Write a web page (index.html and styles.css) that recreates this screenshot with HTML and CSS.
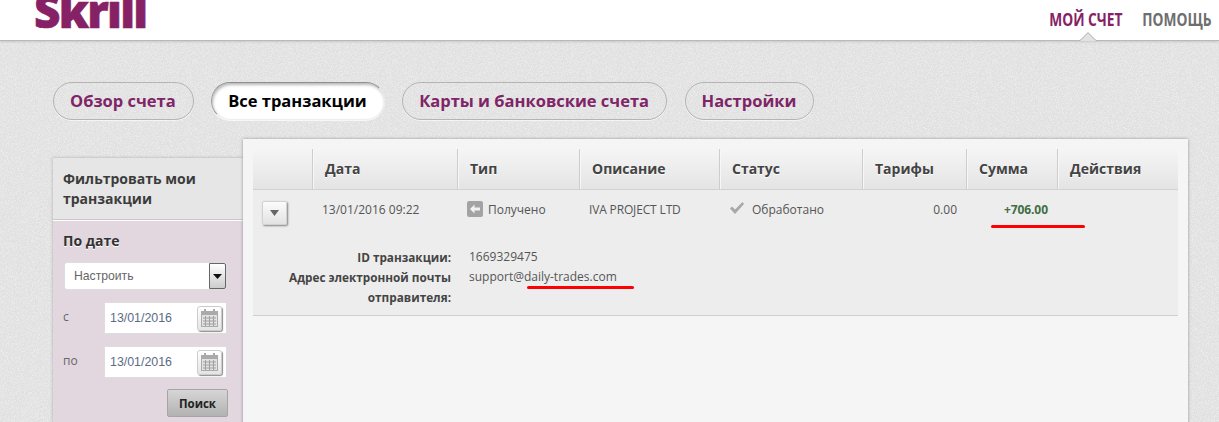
FILE: index.html
```html
<!DOCTYPE html>
<html lang="ru">
<head>
<meta charset="utf-8">
<title>Skrill</title>
<link rel="stylesheet" href="styles.css">
</head>
<body>
<header class="topbar">
  <div class="logo">Skrill</div>
  <nav class="topnav">
    <a class="topnav-item active">МОЙ СЧЕТ</a>
    <a class="topnav-item">ПОМОЩЬ</a>
  </nav>
  <svg class="nav-caret" width="18" height="9" viewBox="0 0 18 9"><path d="M0 9 L9 0 L18 9 Z" fill="#e2e2e2"/><path d="M0 8.500 H1 L9 .7 L17 8.500 H18" fill="none" stroke="#b5b5b5"/></svg>
</header>
<main class="page">
  <div class="tabs">
    <a class="tab">Обзор счета</a>
    <a class="tab current">Все транзакции</a>
    <a class="tab">Карты и банковские счета</a>
    <a class="tab">Настройки</a>
  </div>
  <div class="columns">
    <aside class="sidebar">
      <h2 class="side-title">Фильтровать мои транзакции</h2>
      <div class="side-body">
        <h3 class="side-sub">По дате</h3>
        <div class="select"><span class="select-value">Настроить</span><span class="select-arrow"><svg width="9" height="5" viewBox="0 0 9 5"><path d="M0 0H9L4.500 5Z" fill="#111"/></svg></span></div>
        <div class="date-row">
          <span class="date-label">с</span>
          <div class="date-input"><span>13/01/2016</span>
            <span class="cal"><svg width="17" height="18" viewBox="0 0 17 18"><rect x=".5" y="2.500" width="16" height="15" fill="#e2e2e2" stroke="#aaa"/><rect x="1" y="3" width="15" height="3" fill="#aaa"/><path d="M4 0V4M13 0V4" stroke="#aaa" stroke-width="2"/><path d="M2 9H15M2 12H15M2 15H15M4.500 7V17M8.500 7V17M12.500 7V17" stroke="#a0a0a0"/></svg></span></div>
        </div>
        <div class="date-row">
          <span class="date-label">по</span>
          <div class="date-input"><span>13/01/2016</span>
            <span class="cal"><svg width="17" height="18" viewBox="0 0 17 18"><rect x=".5" y="2.500" width="16" height="15" fill="#e2e2e2" stroke="#aaa"/><rect x="1" y="3" width="15" height="3" fill="#aaa"/><path d="M4 0V4M13 0V4" stroke="#aaa" stroke-width="2"/><path d="M2 9H15M2 12H15M2 15H15M4.500 7V17M8.500 7V17M12.500 7V17" stroke="#a0a0a0"/></svg></span></div>
        </div>
        <div class="search-row"><button class="search">Поиск</button></div>
      </div>
    </aside>
    <section class="panel">
      <div class="thead">
        <div class="th"></div>
        <div class="th">Дата</div>
        <div class="th">Тип</div>
        <div class="th">Описание</div>
        <div class="th">Статус</div>
        <div class="th">Тарифы</div>
        <div class="th">Сумма</div>
        <div class="th">Действия</div>
      </div>
      <div class="row">
        <div class="cells">
          <div class="td"><button class="toggle"><svg width="9" height="6" viewBox="0 0 9 6"><path d="M0 0H9L4.500 6Z" fill="#666"/></svg></button></div>
          <div class="td date-cell">13/01/2016 09:22</div>
          <div class="td type-cell"><svg width="16" height="16" viewBox="0 0 16 16"><rect width="16" height="16" rx="2" fill="#a3a3a3"/><path d="M7.500 3.500L3 8L7.500 12.500V9.500H13V6.500H7.500Z" fill="#f2f2f2"/></svg>Получено</div>
          <div class="td desc-cell">IVA PROJECT LTD</div>
          <div class="td status-cell"><svg width="14" height="14" viewBox="0 0 14 14"><path d="M0 7.500L2 5.500L5 8.500L12.500 1L14 3L5 13Z" fill="#a8a8a8"/></svg>Обработано</div>
          <div class="td fee-cell">0.00</div>
          <div class="td amount-cell">+706.00</div>
          <div class="td"></div>
        </div>
        <dl class="details">
          <dt>ID транзакции:</dt><dd>1669329475</dd>
          <dt>Адрес электронной почты отправителя:</dt><dd>support@daily-trades.com</dd>
        </dl>
      </div>
    </section>
  </div>
</main>
<div class="mark mark-amount"></div>
<div class="mark mark-email"></div>
</body>
</html>
```
FILE: styles.css
```css
* { box-sizing: border-box; }
html, body { height: 422px; overflow: hidden; }
body {
  margin: 0;
  position: relative;
  font-family: "Open Sans", "Noto Sans", sans-serif;
  color: #444;
  background-color: #e0e0e0;
  background-image: url("data:image/svg+xml,%3Csvg xmlns='http://www.w3.org/2000/svg' width='200' height='200'%3E%3Cfilter id='n'%3E%3CfeTurbulence type='fractalNoise' baseFrequency='1.2' numOctaves='2'/%3E%3CfeColorMatrix values='0 0 0 0 1 0 0 0 0 1 0 0 0 0 1 3 0 0 0 -1.200'/%3E%3C/filter%3E%3Crect width='200' height='200' filter='url(%23n)' opacity='.4'/%3E%3C/svg%3E");
}
.topbar {
  position: relative;
  height: 41px;
  background: #fff;
  border-bottom: 1px solid #b9b9b9;
  box-shadow: 0 1px 2px rgba(0,0,0,.12);
  display: flex;
  justify-content: space-between;
}
.logo {
  height: 38px;
  margin: -9px 0 0 34px;
  font-size: 46px;
  font-weight: 800;
  line-height: 38px;
  letter-spacing: -1.800px;
  color: #862165;
  -webkit-text-stroke: .6px #862165;
}
.topnav { display: flex; gap: 4px; padding: 9px 7px 0 0; }
.topnav-item {
  font-size: 17px;
  font-weight: 700;
  line-height: 22px;
  color: #6e6e6e;
  transform: scaleX(.81);
  transform-origin: right;
}
.topnav-item.active { color: #862165; }
.nav-caret { position: absolute; left: 1079px; top: 32px; }
.page { padding: 41px 0 0 53px; }
.tabs { display: flex; gap: 17.500px; height: 38px; }
.tab {
  height: 38px;
  padding: 0 17px 0 16px;
  border: 1px solid #b4b4b4;
  border-radius: 19px;
  font-size: 16.500px;
  font-weight: 700;
  line-height: 36px;
  color: #7f2467;
  box-shadow: 0 1px 0 rgba(255,255,255,.6);
}
.tab.current {
  color: #000;
  background: #fff;
  border-color: #8f8f8f #e8e8e8 #eee #9a9a9a;
  box-shadow: inset 1px 2px 3px rgba(0,0,0,.28), 0 1px 0 rgba(255,255,255,.7);
}
.columns { display: flex; align-items: flex-start; margin-top: 19px; }
.sidebar {
  width: 190px;
  flex: none;
  margin-top: 19px;
  box-shadow: 0 0 3px rgba(0,0,0,.25);
}
.side-title {
  margin: 0;
  height: 63px;
  padding: 11px 10px 0 10px;
  background: #e6e6e6;
  border-bottom: 1px solid #fff;
  box-shadow: inset 0 -1px 0 #c8c8c8;
  font-size: 14px;
  font-weight: 700;
  line-height: 20px;
  color: #3c3c3c;
}
.side-body { height: 210px; background: #e3d7df; padding: 10px 16px 0 11px; }
.side-sub { margin: 0 0 11px -1px; font-size: 14px; font-weight: 700; line-height: 20px; color: #333; text-shadow: 0 1px 0 #fff; }
.select {
  display: flex;
  justify-content: space-between;
  height: 28px;
  background: #fff;
  border: 1px solid #ddd;
  border-radius: 3px;
}
.select-value {
  padding-left: 9px;
  font-family: "Liberation Sans", sans-serif;
  font-size: 12.200px;
  line-height: 26px;
  color: #666;
}
.select-arrow {
  width: 17px;
  display: flex;
  align-items: center;
  justify-content: center;
  border: 1px solid #666;
  border-radius: 0 2px 2px 0;
  background: linear-gradient(#fff, #ccc);
}
.date-row { display: flex; justify-content: space-between; align-items: center; height: 32px; margin-top: 12px; }
.date-label { margin: 0 0 3px -1px; font-size: 12px; color: #666; }
.date-input {
  width: 123px;
  height: 32px;
  background: #fff;
  border: 1px solid #ddd;
  display: flex;
  align-items: center;
  justify-content: space-between;
  padding: 0 4px 0 5px;
  font-family: "Liberation Sans", sans-serif;
  font-size: 12.400px;
  color: #5b6b86;
}
.cal {
  width: 25px;
  height: 25px;
  display: flex;
  align-items: center;
  justify-content: center;
  border: 1px solid #ccc;
  border-radius: 3px;
  background: linear-gradient(#fff, #e4e4e4);
  box-shadow: 1px 1px 1px rgba(0,0,0,.45);
}
.search-row { display: flex; justify-content: flex-end; margin: 11px -1px 0 0; }
.search {
  width: 61px;
  height: 28px;
  padding: 0;
  border: 1px solid #a5a5a5;
  border-radius: 2px;
  background: linear-gradient(#d6d6d6, #b2b2b2);
  font: 700 11.500px "Open Sans", sans-serif;
  color: #222;
}
.panel {
  width: 945px;
  height: 300px;
  padding: 10px;
  background: #f5f5f5;
  box-shadow: 0 0 3px rgba(0,0,0,.35);
}
.thead, .cells {
  display: grid;
  grid-template-columns: 59px 145px 122px 140px 143px 104px 91px 121px;
}
.thead {
  height: 41px;
  background: linear-gradient(#f5f5f5, #e4e4e4);
  border-radius: 4px 4px 0 0;
  border-bottom: 1px solid #d2d2d2;
}
.th {
  padding-left: 12px;
  font-size: 14px;
  font-weight: 700;
  line-height: 39px;
  color: #444;
  border-left: 1px solid #cdcdcd;
  box-shadow: inset 1px 0 0 #f7f7f7;
  text-shadow: 0 1px 0 #fff;
}
.th:first-child { border-left: 0; box-shadow: none; }
.row { height: 126px; background: #ededed; border-bottom: 1px solid #cfcfcf; }
.cells { height: 45px; }
.td { padding-top: 10px; font-size: 12px; line-height: 20px; color: #555; white-space: nowrap; }
.toggle {
  display: flex;
  align-items: center;
  justify-content: center;
  width: 25px;
  height: 24px;
  margin: 1px 0 0 9px;
  padding: 0;
  border: 1px solid #d2d2d2;
  border-radius: 2px;
  background: linear-gradient(#fbfbfb, #e3e3e3);
  box-shadow: 1px 1px 2px rgba(0,0,0,.45);
}
.date-cell { padding-left: 10px; }
.type-cell { display: flex; align-items: flex-start; gap: 5px; padding-left: 10px; }
.type-cell svg { margin-top: 1px; flex: none; }
.desc-cell { padding-left: 10px; letter-spacing: -.15px; }
.status-cell { display: flex; align-items: flex-start; gap: 8px; padding-left: 11px; }
.status-cell svg { margin-top: 1px; flex: none; }
.fee-cell { text-align: right; padding-right: 9px; }
.amount-cell { padding-left: 38px; font-weight: 700; color: #3f6f45; letter-spacing: -.1px; }
.details {
  margin: 12px 0 0;
  display: grid;
  grid-template-columns: 198px 1fr;
  column-gap: 18px;
  font-size: 12px;
  line-height: 20px;
}
.details dt { font-size: 11.750px; font-weight: 700; color: #444; text-align: right; }
.details dd { margin: 0; color: #555; }
.details dt:nth-of-type(2) { padding-left: 25px; }
.mark { position: absolute; height: 3px; background: #f00; border-radius: 2px; }
.mark-amount { left: 991px; top: 225px; width: 94px; }
.mark-email { left: 527px; top: 286px; width: 107px; }
```
